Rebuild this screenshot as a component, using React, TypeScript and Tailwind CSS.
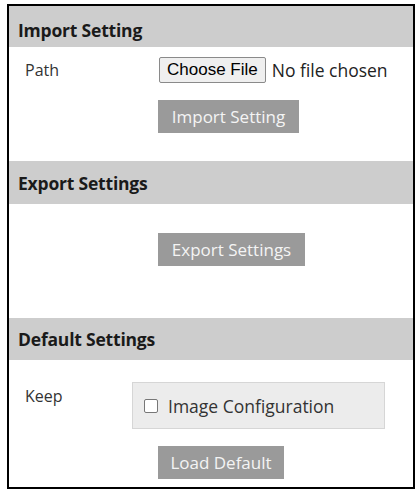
import React from "react";

const SectionHeader = ({ title, h }: { title: string; h: string }) => (
  <div className={`flex items-center bg-[#cdcdcd] pl-[9px] text-[17.5px] font-bold tracking-[-0.2px] text-[#1a1a1a] ${h}`}>
    {title}
  </div>
);

const GrayButton = ({ label, w }: { label: string; w: string }) => (
  <button className={`flex h-[33px] items-center justify-center bg-[#9a9a9a] text-[17px] text-[#f4f4f4] ${w}`}>
    {label}
  </button>
);

const App = () => {
  return (
    <div className="h-[490px] w-[420px] bg-white pl-[7px] pt-[4px]" style={{ fontFamily: '"Open Sans", "Noto Sans", sans-serif' }}>
      <div className="flex h-[485px] w-[408px] flex-col border-2 border-black bg-white">
        <SectionHeader title="Import Setting" h="h-[41px] pt-[7px]" />

        <div className="mt-[10px] flex items-center">
          <div className="w-[150px] pl-[16px] text-[16px] text-[#333]">Path</div>
          <div className="flex h-[26px] items-center rounded-[2px] border border-[#8a8a8a] bg-[#efefef] px-[7px] text-[17px] text-black" style={{ fontFamily: '"Liberation Sans", Arial, sans-serif' }}>
            Choose File
          </div>
          <div className="ml-[6px] text-[17.5px] text-[#222]">No file chosen</div>
        </div>
        <div className="ml-[149px] mt-[17px]">
          <GrayButton label="Import Setting" w="w-[141px] h-[32px]" />
        </div>

        <div className="mt-[28px]">
          <SectionHeader title="Export Settings" h="h-[43px]" />
        </div>
        <div className="ml-[149px] mt-[29px]">
          <GrayButton label="Export Settings" w="w-[147px]" />
        </div>

        <div className="mt-[52px]">
          <SectionHeader title="Default Settings" h="h-[42px]" />
        </div>
        <div className="mt-[22px] flex items-start">
          <div className="w-[123px] pl-[16px] pt-[2px] text-[16px] text-[#333]">Keep</div>
          <div className="flex h-[47px] w-[253px] items-center border border-[#d6d6d6] bg-[#ececec] pl-[11px]">
            <span className="h-[14px] w-[14px] rounded-[2px] border border-[#777] bg-white" />
            <span className="ml-[10px] text-[17.5px] text-[#333]">Image Configuration</span>
          </div>
        </div>
        <div className="ml-[149px] mt-[17px]">
          <GrayButton label="Load Default" w="w-[126px]" />
        </div>
      </div>
    </div>
  );
};

export default App;
